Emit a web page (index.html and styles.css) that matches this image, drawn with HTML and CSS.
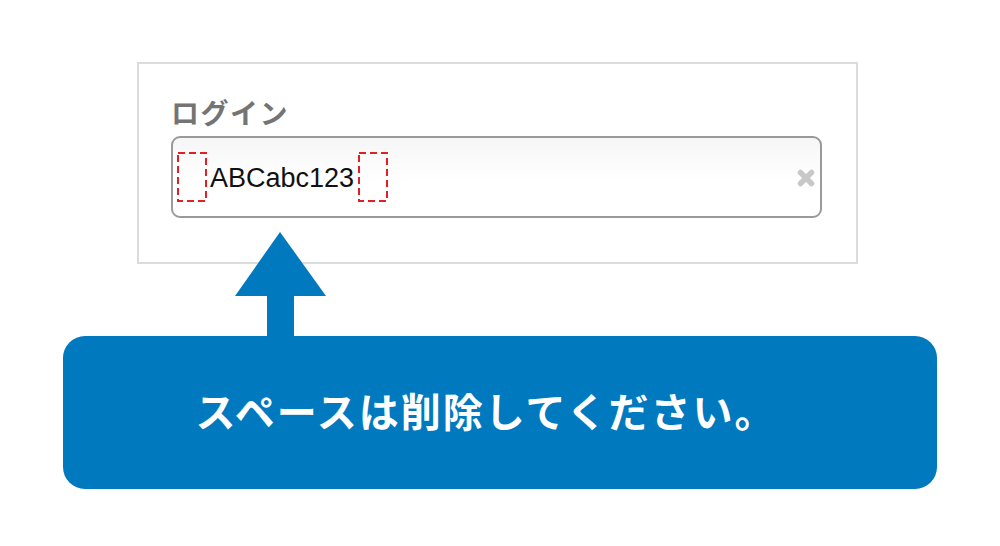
FILE: index.html
```html
<!DOCTYPE html>
<html lang="ja">
<head>
<meta charset="utf-8">
<link rel="stylesheet" href="styles.css">
</head>
<body>
<div class="page">
  <div class="card">
    <div class="label">ログイン</div>
    <div class="field">
      <svg class="space" width="30" height="50" viewBox="0 0 30 50"><rect x="1" y="1" width="28" height="48" fill="none" stroke="#e31e24" stroke-width="2" stroke-dasharray="7 4"/></svg><span class="value">ABCabc123</span><svg class="space" width="30" height="50" viewBox="0 0 30 50"><rect x="1" y="1" width="28" height="48" fill="none" stroke="#e31e24" stroke-width="2" stroke-dasharray="7 4"/></svg>
      <svg class="clear" width="18" height="18" viewBox="0 0 18 18">
        <path d="M3.5 3.5 L14.5 14.5 M14.5 3.5 L3.5 14.5" stroke="#c8c8c8" stroke-width="5.5" stroke-linecap="round"/>
      </svg>
    </div>
  </div>
  <svg class="arrow" width="92" height="106" viewBox="0 0 92 106">
    <polygon points="45,0 91,64 59,64 59,106 32,106 32,64 0,64" fill="#0079be"/>
  </svg>
  <div class="notice"><span class="notice-text">スペースは削除してください。</span></div>
</div>
</body>
</html>
```
FILE: styles.css
```css
html, body {
  margin: 0;
  padding: 0;
  background: #ffffff;
}
.page {
  position: relative;
  width: 1000px;
  height: 546px;
  padding-top: 62px;
  box-sizing: border-box;
  font-family: "Noto Sans CJK JP", "Noto Sans", sans-serif;
}
.card {
  margin-left: 137px;
  width: 721px;
  height: 202px;
  box-sizing: border-box;
  border: 2px solid #dcdcdc;
  padding: 28px 0 0 32px;
}
.label {
  font-size: 28px;
  font-weight: 700;
  color: #747474;
  line-height: 40px;
  height: 44px;
  letter-spacing: 1.5px;
}
.field {
  width: 651px;
  height: 82px;
  box-sizing: border-box;
  border: 2px solid #9a9a9a;
  border-radius: 9px;
  background: linear-gradient(#f6f6f6 0%, #fbfbfb 30%, #ffffff 55%);
  display: flex;
  align-items: center;
  padding-left: 4px;
  padding-right: 5px;
}
.space {
  flex: none;
  display: block;
}
.value {
  font-family: "Liberation Sans", Arial, sans-serif;
  font-size: 27px;
  color: #111111;
  padding: 0 4px 0 3px;
  margin-top: 2px;
}
.clear {
  margin-left: auto;
  margin-top: 2px;
}
.arrow {
  position: absolute;
  left: 235px;
  top: 232px;
}
.notice {
  margin: 72px 0 0 63px;
  width: 874px;
  height: 153px;
  box-sizing: border-box;
  background: #0079be;
  border-radius: 22px;
  display: flex;
  align-items: center;
  justify-content: center;
  padding: 0 28px 6px 0;
}
.notice-text {
  color: #ffffff;
  font-size: 40px;
  font-weight: 700;
  letter-spacing: 2px;
}
```
